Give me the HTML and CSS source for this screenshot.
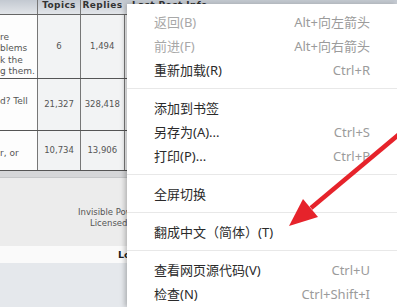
FILE: index.html
```html
<!DOCTYPE html>
<html lang="zh-CN">

<head>
    <meta charset="UTF-8">
    <meta name="viewport" content="width=device-width, initial-scale=1.0">
    <title>Forum</title>
    <link rel="stylesheet" href="styles.css">
</head>

<body>
    <div class="page">
        <table class="forum">
            <tr class="head">
                <th class="desc"></th>
                <th class="num topics">Topics</th>
                <th class="num replies">Replies</th>
                <th class="last">Last Post Info</th>
            </tr>
            <tr class="row-1">
                <td class="desc">re<br>blems<br>k the<br>g them.</td>
                <td class="num">6</td>
                <td class="num">1,494</td>
                <td class="last"></td>
            </tr>
            <tr class="row-2">
                <td class="desc">d? Tell</td>
                <td class="num">21,327</td>
                <td class="num">328,418</td>
                <td class="last"></td>
            </tr>
            <tr class="row-3">
                <td class="desc">r, or</td>
                <td class="num">10,734</td>
                <td class="num">13,906</td>
                <td class="last"></td>
            </tr>
        </table>

        <div class="table-foot"></div>

        <div class="copyright">
            <p>Invisible Power Board</p>
            <p class="second">Licensed to: Forum</p>
        </div>

        <div class="login-bar"><b>Log In</b></div>
        <div class="bottom"></div>
    </div>

    <!-- context menu -->
    <div class="menu">
        <div class="item disabled"><span>返回(B)</span><span class="key">Alt+向左箭头</span></div>
        <div class="item disabled"><span>前进(F)</span><span class="key">Alt+向右箭头</span></div>
        <div class="item"><span>重新加载(R)</span><span class="key">Ctrl+R</span></div>
        <div class="sep"></div>
        <div class="item"><span>添加到书签</span></div>
        <div class="item"><span>另存为(A)...</span><span class="key">Ctrl+S</span></div>
        <div class="item"><span>打印(P)...</span><span class="key">Ctrl+P</span></div>
        <div class="sep"></div>
        <div class="item"><span>全屏切换</span></div>
        <div class="sep"></div>
        <div class="item"><span>翻成中文（简体）(T)</span></div>
        <div class="sep"></div>
        <div class="item"><span>查看网页源代码(V)</span><span class="key">Ctrl+U</span></div>
        <div class="item"><span>检查(N)</span><span class="key">Ctrl+Shift+I</span></div>
    </div>

    <svg class="arrow" width="397" height="307" viewBox="0 0 397 307">
        <line x1="311" y1="208" x2="403" y2="131" stroke="#e6232b" stroke-width="4.5" />
        <polygon points="289,226 303,199 318,217" fill="#e6232b" />
    </svg>
</body>

</html>
```

FILE: styles.css
```css
body {
    margin: 0;
    padding: 0;
    font-family: "DejaVu Sans", Verdana, sans-serif;
    overflow: hidden;
}

.page {
    width: 397px;
    height: 307px;
    overflow: hidden;
    background-color: #e5e8ec;
}

.forum {
    width: 397px;
    border-collapse: collapse;
    table-layout: fixed;
    font-size: 9px;
    color: #555;
    white-space: nowrap;
}

.forum th {
    padding: 0;
    line-height: 11px;
    vertical-align: top;
    text-align: center;
    color: #333;
    letter-spacing: 0.4px;
    background: linear-gradient(#c3c9d1, #e2e5e9);
    border-bottom: 1px solid #666;
}

.forum th.desc {
    width: 37px;
}

.forum th.topics {
    width: 42px;
}

.forum th.replies {
    width: 43px;
}

.forum th.last {
    text-align: left;
    padding-left: 8px;
}

.forum td {
    padding: 0;
    border-bottom: 1px solid #555;
}

.forum td.desc {
    vertical-align: top;
    padding-top: 17px;
    line-height: 11.5px;
    background-color: #fdfdfd;
    overflow: hidden;
}

.forum .num {
    border-left: 1px solid #777;
}

.forum td.num {
    text-align: center;
    font-size: 8.5px;
    background-color: #f2f3f4;
}

.forum td.last {
    border-left: 1px solid #777;
    background-color: #f2f3f4;
}

.head {
    height: 14px;
}

.row-1 {
    height: 64px;
}

.row-2 {
    height: 52px;
}

.row-3 {
    height: 40px;
}

.table-foot {
    height: 6px;
    background-color: #d5d6d8;
    border-bottom: 1px solid #c4c6c8;
}

.copyright {
    height: 39px;
    padding: 29px 0 0 78px;
    background-color: #ececec;
    font-size: 8.5px;
    color: #555;
    line-height: 11px;
    white-space: nowrap;
}

.copyright p {
    margin: 0;
}

.copyright .second {
    padding-left: 12px;
}

.login-bar {
    height: 17px;
    padding-left: 118px;
    line-height: 17px;
    font-size: 9.5px;
    color: #222;
    background-color: #fafafa;
}

.bottom {
    height: 44px;
    background-color: #e5e8ec;
}

.menu {
    position: absolute;
    top: 4px;
    left: 127px;
    right: 0;
    bottom: 0;
    padding: 6px 0;
    background-color: #fff;
    box-shadow: -2px 0 5px rgba(0, 0, 0, 0.25);
    font-family: "Noto Sans", "Noto Sans CJK SC", sans-serif;
    font-size: 13px;
}

.item {
    display: flex;
    justify-content: space-between;
    align-items: center;
    height: 24px;
    line-height: 24px;
    padding: 0 27px;
    color: #2a2a2a;
    white-space: nowrap;
}

.item.disabled {
    color: #a8a8a8;
}

.key {
    color: #9b9b9b;
}

.sep {
    height: 1px;
    margin: 6px 0 7px;
    background-color: #e8e8e8;
}

.arrow {
    position: absolute;
    top: 0;
    left: 0;
    pointer-events: none;
}
```
